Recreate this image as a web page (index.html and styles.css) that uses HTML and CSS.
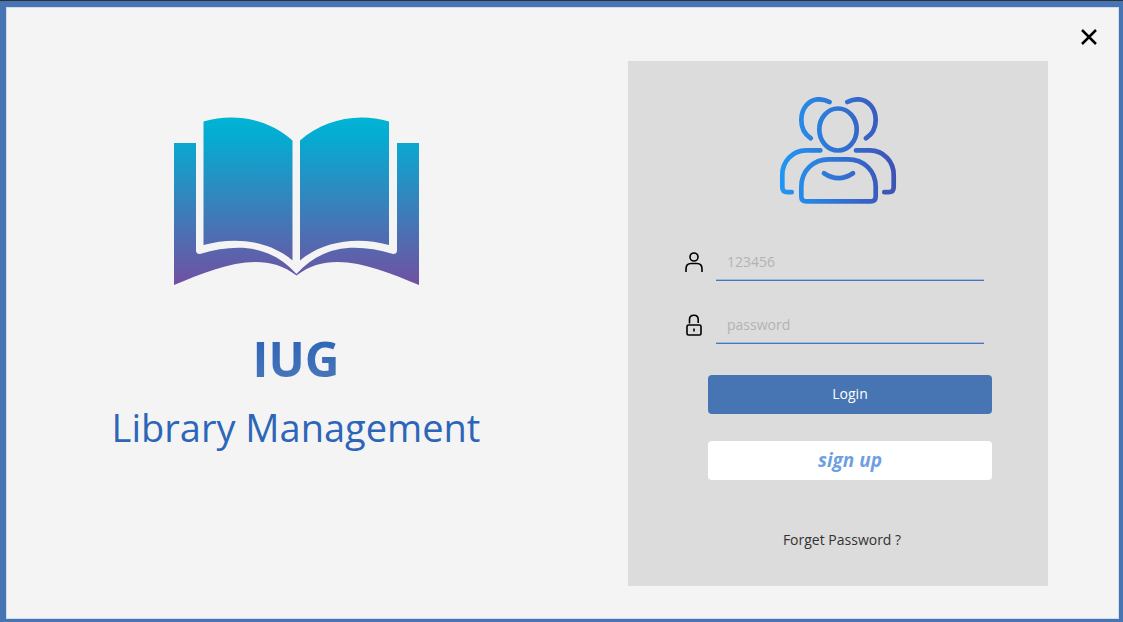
FILE: index.html
```html
<!DOCTYPE html>
<html lang="en">
<head>
<meta charset="utf-8">
<meta name="viewport" content="width=device-width, initial-scale=1">
<title>IUG Library Management</title>
<link rel="stylesheet" href="styles.css">
</head>
<body>
<div class="window">
  <header class="titlebar">
    <button class="close" type="button" aria-label="Close">
      <svg width="18" height="18" viewBox="0 0 18 18" aria-hidden="true"><path d="M2 2 16 16M16 2 2 16"/></svg>
    </button>
  </header>
  <main class="content">
    <section class="brand">
      <svg class="book" viewBox="174 117 245 168" aria-hidden="true">
        <defs>
          <linearGradient id="bookFill" gradientUnits="userSpaceOnUse" x1="0" y1="117" x2="0" y2="285">
            <stop offset="0" stop-color="#00b4d6"/>
            <stop offset=".12" stop-color="#06abd1"/>
            <stop offset="1" stop-color="#7150a2"/>
          </linearGradient>
        </defs>
        <g fill="url(#bookFill)">
          <path d="M203.500 121.500C236 112 270 120 292.500 140.500V260.500C270 241 236 236 203.500 245Z"/>
          <path d="M389 121.500C357 112 323 120 300 140.500V260.500C323 241 357 236 389 245Z"/>
          <path d="M174 143H196V250.500Q196 254 200 254C238 243 270 245 296.500 274C323 245 355 243 393 254Q397 254 397 250.500V143H419V285C378 268 331 248 296.500 275.500C262 248 215 268 174 285Z"/>
        </g>
      </svg>
      <h1 class="name">IUG</h1>
      <p class="tagline">Library Management</p>
    </section>
    <section class="panel">
      <svg class="people" viewBox="779 97 118 108" aria-hidden="true">
        <defs>
          <linearGradient id="peopleStroke" gradientUnits="userSpaceOnUse" x1="780" y1="0" x2="896" y2="0">
            <stop offset="0" stop-color="#2196f3"/>
            <stop offset="1" stop-color="#3f51b5"/>
          </linearGradient>
        </defs>
        <g fill="none" stroke="url(#peopleStroke)" stroke-width="4.700" stroke-linecap="round">
          <ellipse cx="838" cy="129.500" rx="18.700" ry="21"/>
          <path d="M829.500 102C826 100 822 99.300 818.500 99.300C809 99.300 801.300 108.500 801.300 120C801.300 127.500 805 134.500 810.700 138.300"/>
          <path d="M847.300 102C851 100 854.500 99.300 858 99.300C868 99.300 875.700 108.500 875.700 120C875.700 127.500 872 134.500 866 138.300"/>
          <path d="M820.300 150.400H806C792.500 150.400 782.300 161.500 782.300 175V187Q782.300 192.200 787.500 192.200H791.700"/>
          <path d="M856 150.400H870C883.500 150.400 893.700 161.500 893.700 175V187Q893.700 192.200 888.500 192.200H884.300"/>
          <path d="M806.500 201.400H870.500Q875.700 201.400 875.700 196.200V187C875.700 171 864 159.400 848 159.400H829C813 159.400 801.300 171 801.300 187V196.200Q801.300 201.400 806.500 201.400Z"/>
          <path d="M824 173.300Q838.500 183 853 173.300"/>
        </g>
      </svg>
      <form class="form" onsubmit="return false">
        <div class="field">
          <label for="user" aria-label="User ID">
            <svg class="glyph" viewBox="0 0 20 24"><ellipse cx="10" cy="7" rx="4" ry="4"/><path d="M2 22V19Q2 13.500 7 13.500H13Q18 13.500 18 19V22"/></svg>
          </label>
          <input id="user" type="text" placeholder="123456">
        </div>
        <div class="field">
          <label for="pass" aria-label="Password">
            <svg class="glyph" viewBox="0 0 20 24"><path d="M5.500 10.500V6.500Q5.500 2.200 10 2.200Q14.200 2.200 14.200 6.500V10"/><rect x="3" y="12" width="14" height="10" rx="1.500"/><path d="M10 15.500V18.500"/></svg>
          </label>
          <input id="pass" type="password" placeholder="password">
        </div>
        <div class="actions">
          <button class="btn login" type="submit">Login</button>
          <button class="btn signup" type="button">sign up</button>
        </div>
      </form>
      <a class="forgot" href="#">Forget Password ?</a>
    </section>
  </main>
</div>
</body>
</html>
```
FILE: styles.css
```css
* { box-sizing: border-box; }

body {
  margin: 0;
  padding: 6px 4px 3px 6px;
  min-height: 100vh;
  display: flex;
  border-top: 1px solid #2d3035;
  background: #4775b3;
  font-family: "Segoe UI", "Open Sans", "Noto Sans", sans-serif;
  font-size: 14px;
}

.window {
  flex: 1;
  background: #f4f4f4;
  border: 1px solid #cfdcee;
}

.titlebar {
  display: flex;
  justify-content: flex-end;
  padding: 20px 20px 15px;
}

.close {
  display: flex;
  padding: 0;
  border: 0;
  background: none;
  cursor: pointer;
}

.close path { stroke: #000; stroke-width: 2.5; }

.content {
  display: grid;
  grid-template-columns: 581fr 420fr;
  gap: 40px;
  padding: 0 70px 32px 0;
}

.brand {
  display: flex;
  flex-direction: column;
  align-items: center;
  padding: 56px 3px 0 0;
  text-align: center;
}

.book { width: 245px; height: 168px; }

.name {
  margin: 42px 0 0;
  font-size: 48px;
  line-height: 64px;
  font-weight: 700;
  background: linear-gradient(#2a64b8 10%, #4b77b8 90%);
  background-clip: text;
  -webkit-background-clip: text;
  color: transparent;
}

.tagline {
  margin: 8px 0 0;
  font-size: 38px;
  line-height: 56px;
  color: #2d66b8;
}

.panel {
  display: flex;
  flex-direction: column;
  align-items: center;
  padding: 36px 56px;
  background: #dcdcdc;
}

.people { width: 118px; height: 108px; }

.form {
  align-self: stretch;
  display: flex;
  flex-direction: column;
  gap: 25px;
  margin-top: 38px;
}

.field {
  display: flex;
  align-items: center;
  gap: 12px;
  padding-right: 8px;
}

.glyph {
  display: block;
  width: 20px;
  height: 24px;
  fill: none;
  stroke: #000;
  stroke-width: 1.6;
}

.field input {
  flex: 1;
  min-width: 0;
  height: 38px;
  padding: 0 11px;
  border: 0;
  border-bottom: 1px solid #4277c4;
  box-shadow: inset 0 -1px #a4b9d8;
  background: none;
  font: inherit;
  color: #333;
}

.field input::placeholder { color: #b3b3b3; opacity: 1; }

.actions {
  display: flex;
  flex-direction: column;
  gap: 27px;
  margin: 6px 0 0 24px;
}

.btn {
  height: 39px;
  padding: 0 0 2px;
  border: 0;
  border-radius: 4px;
  font: inherit;
  cursor: pointer;
}

.login { background: #4775b3; color: #fff; }

.signup {
  background: #fff;
  color: #6f9fe3;
  font-size: 19px;
  font-weight: 700;
  font-style: italic;
}

.forgot {
  margin: 50px 0 0 8px;
  line-height: 20px;
  color: #333;
  text-decoration: none;
}
```
